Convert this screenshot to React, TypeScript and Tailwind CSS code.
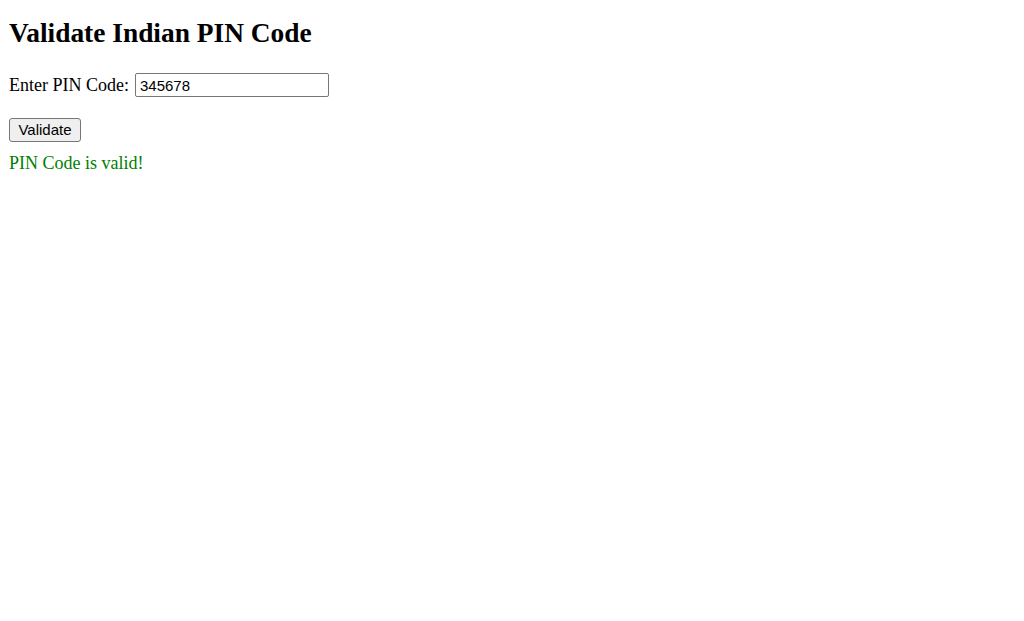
import React, { useState } from 'react';

export default function App() {
  const [pin, setPin] = useState('345678');
  const [message, setMessage] = useState<{ text: string; ok: boolean } | null>({
    text: 'PIN Code is valid!',
    ok: true,
  });

  const validate = () => {
    const ok = /^[1-9][0-9]{5}$/.test(pin);
    setMessage({ text: ok ? 'PIN Code is valid!' : 'Invalid PIN Code!', ok });
  };

  return (
    <div className="min-h-screen bg-white px-[9px] pt-[18px] text-black font-['Liberation_Serif',serif] text-[18px]">
      <h1 className="text-[27.4px] font-bold leading-[31px] mb-[24px]">Validate Indian PIN Code</h1>
      <div className="flex items-center h-[24px]">
        <label htmlFor="pin" className="mr-[6px] leading-[21px]">Enter PIN Code:</label>
        <input
          id="pin"
          type="text"
          value={pin}
          onChange={(e) => setPin(e.target.value)}
          className="w-[194px] h-[24px] px-[4px] border border-[#767676] rounded-[2px] bg-white font-['Liberation_Sans',Arial,sans-serif] text-[15px] outline-none"
        />
      </div>
      <button
        onClick={validate}
        className="block mt-[21px] w-[72px] h-[24px] border border-[#767676] rounded-[3px] bg-[#efefef] font-['Liberation_Sans',Arial,sans-serif] text-[15px] leading-[20px]"
      >
        Validate
      </button>
      {message && (
        <p className={`mt-[11px] leading-[21px] ${message.ok ? 'text-[#008000]' : 'text-[#ff0000]'}`}>
          {message.text}
        </p>
      )}
    </div>
  );
}
